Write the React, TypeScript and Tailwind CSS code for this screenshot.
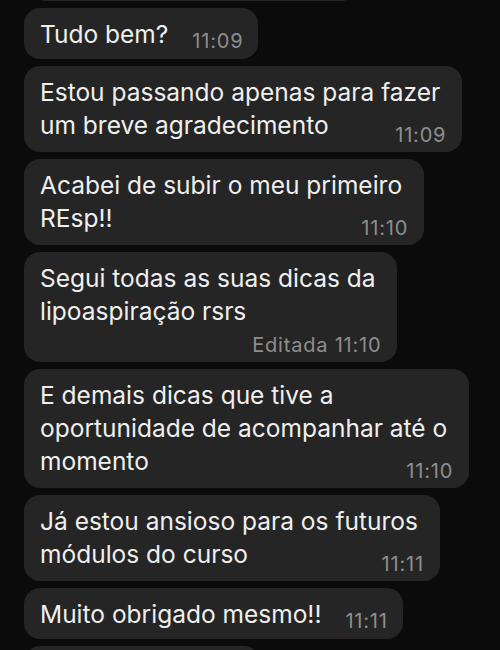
type Msg = {
  lines: string[];
  time: string;
  layout: "inline" | "corner" | "row";
};

const messages: Msg[] = [
  { lines: ["Tudo bem?"], time: "11:09", layout: "inline" },
  { lines: ["Estou passando apenas para fazer", "um breve agradecimento"], time: "11:09", layout: "corner" },
  { lines: ["Acabei de subir o meu primeiro", "REsp!!"], time: "11:10", layout: "corner" },
  { lines: ["Segui todas as suas dicas da", "lipoaspiração rsrs"], time: "Editada 11:10", layout: "row" },
  { lines: ["E demais dicas que tive a", "oportunidade de acompanhar até o", "momento"], time: "11:10", layout: "corner" },
  { lines: ["Já estou ansioso para os futuros", "módulos do curso"], time: "11:11", layout: "corner" },
  { lines: ["Muito obrigado mesmo!!"], time: "11:11", layout: "inline" },
];

function Text({ lines }: { lines: string[] }) {
  return (
    <p className="pr-[6px] text-[24.5px] leading-[33px] text-[#efefef] whitespace-nowrap">
      {lines.map((l, i) => (
        <span key={i} className="block">
          {l}
        </span>
      ))}
    </p>
  );
}

function Time({ value }: { value: string }) {
  return (
    <span className="text-[20px] leading-[24px] tracking-[0.8px] text-[#8e8e8e] whitespace-nowrap">{value}</span>
  );
}

function Bubble({ msg }: { msg: Msg }) {
  if (msg.layout === "inline") {
    return (
      <div className="flex w-fit items-end rounded-[16px] bg-[#252525] pl-4 pr-[15px] pt-[10px] pb-[8px]">
        <Text lines={msg.lines} />
        <span className="ml-[18px] mb-[-2px] flex">
          <Time value={msg.time} />
        </span>
      </div>
    );
  }
  return (
    <div className="flex w-fit flex-col rounded-[16px] bg-[#252525] pl-4 pr-4 pt-[10px] pb-[5px]">
      <Text lines={msg.lines} />
      <div className={msg.layout === "corner" ? "flex justify-end -mt-[19px]" : "flex justify-end mt-[5px]"}>
        <Time value={msg.time} />
      </div>
    </div>
  );
}

export default function App() {
  return (
    <div className="h-[650px] overflow-hidden bg-[#0b0b0b] font-[Inter,sans-serif]">
      <div className="flex flex-col gap-[7px] pl-6">
        <div className="-mt-[39px] ml-[6px] h-[40px] w-[327px] rounded-[16px] bg-[#252525]" />
        {messages.map((m, i) => (
          <Bubble key={i} msg={m} />
        ))}
        <div className="h-[40px] w-[236px] rounded-[16px] bg-[#252525]" />
      </div>
    </div>
  );
}
